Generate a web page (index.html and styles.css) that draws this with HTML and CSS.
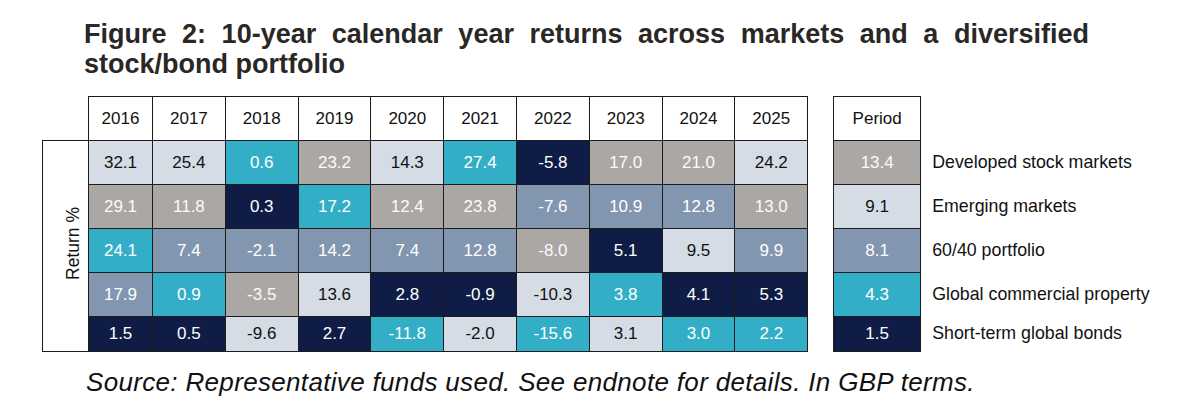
FILE: index.html
```html
<!DOCTYPE html>
<html lang="en">
<head>
<meta charset="utf-8">
<title>Figure 2</title>
<link rel="stylesheet" href="styles.css">
</head>
<body>
<div class="page">
  <h1 class="title">Figure 2: 10-year calendar year returns across markets and a diversified stock/bond portfolio</h1>
  <div class="figure">
    <table class="matrix">
      <colgroup>
        <col class="c-label"><col class="c-first"><col class="c-year"><col class="c-year"><col class="c-year"><col class="c-year"><col class="c-year"><col class="c-year"><col class="c-year"><col class="c-year"><col class="c-year">
      </colgroup>
      <thead>
        <tr class="r-head">
          <th class="corner"></th>
          <th>2016</th><th>2017</th><th>2018</th><th>2019</th><th>2020</th><th>2021</th><th>2022</th><th>2023</th><th>2024</th><th>2025</th>
        </tr>
      </thead>
      <tbody>
        <tr class="r-body">
          <td class="label" rowspan="5"><span class="vtext">Return %</span></td>
          <td class="l">32.1</td><td class="l">25.4</td><td class="t">0.6</td><td class="g">23.2</td><td class="l">14.3</td><td class="t">27.4</td><td class="n">-5.8</td><td class="g">17.0</td><td class="g">21.0</td><td class="l">24.2</td>
        </tr>
        <tr class="r-body">
          <td class="g">29.1</td><td class="g">11.8</td><td class="n">0.3</td><td class="t">17.2</td><td class="g">12.4</td><td class="g">23.8</td><td class="s">-7.6</td><td class="s">10.9</td><td class="s">12.8</td><td class="g">13.0</td>
        </tr>
        <tr class="r-body">
          <td class="t">24.1</td><td class="s">7.4</td><td class="s">-2.1</td><td class="s">14.2</td><td class="s">7.4</td><td class="s">12.8</td><td class="g">-8.0</td><td class="n">5.1</td><td class="l">9.5</td><td class="s">9.9</td>
        </tr>
        <tr class="r-body">
          <td class="s">17.9</td><td class="t">0.9</td><td class="g">-3.5</td><td class="l">13.6</td><td class="n">2.8</td><td class="n">-0.9</td><td class="l">-10.3</td><td class="t">3.8</td><td class="n">4.1</td><td class="n">5.3</td>
        </tr>
        <tr class="r-last">
          <td class="n">1.5</td><td class="n">0.5</td><td class="l">-9.6</td><td class="n">2.7</td><td class="t">-11.8</td><td class="l">-2.0</td><td class="t">-15.6</td><td class="l">3.1</td><td class="t">3.0</td><td class="t">2.2</td>
        </tr>
      </tbody>
    </table>

    <table class="period">
      <thead>
        <tr class="r-head"><th>Period</th></tr>
      </thead>
      <tbody>
        <tr class="r-body"><td class="g">13.4</td></tr>
        <tr class="r-body"><td class="l">9.1</td></tr>
        <tr class="r-body"><td class="s">8.1</td></tr>
        <tr class="r-body"><td class="t">4.3</td></tr>
        <tr class="r-last"><td class="n">1.5</td></tr>
      </tbody>
    </table>

    <ul class="legend">
      <li class="lg-row">Developed stock markets</li>
      <li class="lg-row">Emerging markets</li>
      <li class="lg-row">60/40 portfolio</li>
      <li class="lg-row">Global commercial property</li>
      <li class="lg-row lg-last">Short-term global bonds</li>
    </ul>
  </div>
  <p class="source">Source: Representative funds used. See endnote for details. In GBP terms.</p>
</div>
</body>
</html>
```

FILE: styles.css
```css
html, body {
  margin: 0;
  padding: 0;
  background: #ffffff;
}

.page {
  width: 1200px;
  height: 414px;
  overflow: hidden;
  font-family: "Liberation Sans", Arial, Helvetica, sans-serif;
  color: #111111;
}

.title {
  margin: 19px 0 0 84px;
  width: 1005px;
  font-size: 27px;
  font-weight: bold;
  line-height: 30px;
  text-align: justify;
  color: #2a2724;
}

.figure {
  display: flex;
  align-items: flex-start;
  margin: 17px 0 0 42px;
}

table {
  border-collapse: collapse;
  table-layout: fixed;
}

.matrix {
  width: 766px;
}

.c-label { width: 46px; }
.c-first { width: 64px; }
.c-year { width: 72.8px; }

th, td {
  border: 1px solid #1c1c1c;
  padding: 0;
  text-align: center;
  vertical-align: middle;
  font-size: 17px;
  font-weight: normal;
  line-height: 20px;
}

th {
  background: #ffffff;
  color: #111111;
}

.r-head { height: 44px; }
.r-body { height: 44px; }
.r-last { height: 35px; }

.corner {
  border: none;
  background: transparent;
}

.label {
  background: #ffffff;
  padding-left: 14px;
}

.vtext {
  display: inline-block;
  writing-mode: vertical-rl;
  transform: rotate(180deg);
  font-size: 17.5px;
  color: #111111;
}

.l { background: #d5dce5; color: #111111; }
.t { background: #33aec7; color: #ffffff; }
.n { background: #0f1c45; color: #ffffff; }
.g { background: #aba7a5; color: #fbfbfb; }
.s { background: #8396b0; color: #ffffff; }

.period {
  width: 88px;
  margin-left: 25px;
}

.legend {
  list-style: none;
  margin: 0 0 0 11px;
  padding: 44px 0 0 0;
  display: flex;
  flex-direction: column;
}

.lg-row {
  height: 44px;
  display: flex;
  align-items: center;
  font-size: 17.8px;
  color: #111111;
  white-space: nowrap;
}

.lg-last { height: 35px; }

.source {
  margin: 15px 0 0 86px;
  font-size: 26px;
  font-style: italic;
  letter-spacing: 0.33px;
  line-height: 30px;
  color: #111111;
}
```
